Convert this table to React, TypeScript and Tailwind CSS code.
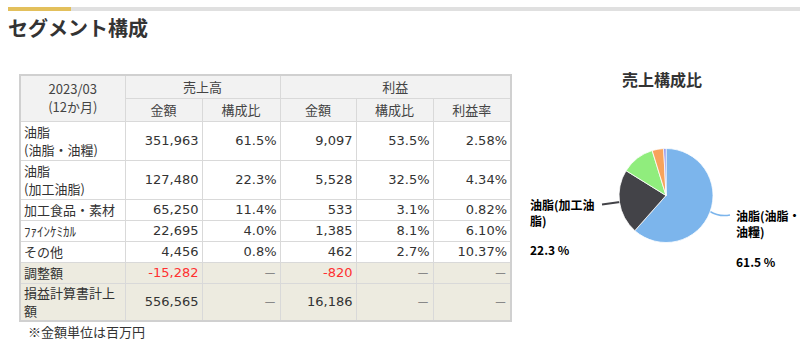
import React from "react";

const rows = [
  { name: ["油脂", "(油脂・油糧)"], sales: "351,963", ratio: "61.5%", profit: "9,097", pRatio: "53.5%", margin: "2.58%" },
  { name: ["油脂", "(加工油脂)"], sales: "127,480", ratio: "22.3%", profit: "5,528", pRatio: "32.5%", margin: "4.34%" },
  { name: ["加工食品・素材"], sales: "65,250", ratio: "11.4%", profit: "533", pRatio: "3.1%", margin: "0.82%" },
  { name: ["ﾌｧｲﾝｹﾐｶﾙ"], sales: "22,695", ratio: "4.0%", profit: "1,385", pRatio: "8.1%", margin: "6.10%" },
  { name: ["その他"], sales: "4,456", ratio: "0.8%", profit: "462", pRatio: "2.7%", margin: "10.37%" },
];

const totals = [
  { name: "調整額", sales: "-15,282", profit: "-820", neg: true },
  { name: "損益計算書計上額", sales: "556,565", profit: "16,186", neg: false },
];

const slices = [
  { value: 351963, color: "#7cb5ec" },
  { value: 127480, color: "#434348" },
  { value: 65250, color: "#90ed7d" },
  { value: 22695, color: "#f7a35c" },
  { value: 4456, color: "#8085e9" },
];

function Pie() {
  const cx = 146;
  const cy = 135.5;
  const r = 47;
  const total = slices.reduce((s, x) => s + x.value, 0);
  let acc = 0;
  const pt = (f: number) => {
    const a = f * Math.PI * 2;
    return [cx + r * Math.sin(a), cy - r * Math.cos(a)];
  };
  return (
    <svg width="280" height="250" viewBox="0 0 280 250" className="block">
      <text x="142" y="26" textAnchor="middle" fontSize="16" fontWeight="bold" fill="#333">
        売上構成比
      </text>
      <path d="M82 144.5 L100 142" stroke="#434348" strokeWidth="2" fill="none" />
      <path d="M190 151.5 Q199 157 210 155" stroke="#7cb5ec" strokeWidth="1.5" fill="none" />
      {slices.map((s, i) => {
        const f0 = acc / total;
        acc += s.value;
        const f1 = acc / total;
        const [x0, y0] = pt(f0);
        const [x1, y1] = pt(f1);
        const large = f1 - f0 > 0.5 ? 1 : 0;
        return (
          <path
            key={i}
            d={`M${cx} ${cy} L${x0} ${y0} A${r} ${r} 0 ${large} 1 ${x1} ${y1} Z`}
            fill={s.color}
            stroke="#fff"
            strokeWidth="0.8"
            strokeLinejoin="round"
          />
        );
      })}
      <g fontSize="12" fontWeight="bold" fill="#000">
        <text x="10" y="150">油脂(加工油</text>
        <text x="10" y="166">脂)</text>
        <text x="10" y="195">22.3 %</text>
        <text x="216" y="161">油脂(油脂・</text>
        <text x="216" y="177">油糧)</text>
        <text x="216" y="207">61.5 %</text>
      </g>
    </svg>
  );
}

const jp = "font-['Noto_Sans_CJK_JP',sans-serif]";
const num = "font-['DejaVu_Sans',sans-serif]";
const th = `border border-[#d9d9d9] bg-[#f2f2f2] py-0 font-normal text-center text-[#444] ${jp}`;
const td = "border border-[#d9d9d9] py-0 px-[3px] align-middle";

export default function App() {
  return (
    <div className="w-[800px] h-[340px] bg-white overflow-hidden text-[#333] font-['Noto_Sans_CJK_JP',sans-serif]">
      <div className="flex pt-[7px] pl-[8px]">
        <div className="w-[63px] h-[4px] bg-[#e3c05c]" />
        <div className="flex-1 h-[4px] bg-[#e0e0e0]" />
      </div>
      <h2 className="mt-[3px] pl-[8px] text-[20px] leading-[28px] font-bold text-[#333]">
        セグメント構成
      </h2>

      <div className="flex">
        <div className="pl-[19px] pt-[32px] w-[520px]">
          <table className="table-fixed border-collapse border-2 border-[#d0d0d0] text-[13px] leading-[18px] w-[491px]">
            <colgroup>
              <col className="w-[105px]" />
              <col className="w-[77px]" />
              <col className="w-[78px]" />
              <col className="w-[76px]" />
              <col className="w-[77px]" />
              <col className="w-[78px]" />
            </colgroup>
            <thead>
              <tr className="h-[23px]">
                <th rowSpan={2} className={th}>
                  2023/03
                  <br />
                  (12か月)
                </th>
                <th colSpan={2} className={th}>売上高</th>
                <th colSpan={3} className={th}>利益</th>
              </tr>
              <tr className="h-[23px]">
                <th className={th}>金額</th>
                <th className={th}>構成比</th>
                <th className={th}>金額</th>
                <th className={th}>構成比</th>
                <th className={th}>利益率</th>
              </tr>
            </thead>
            <tbody>
              {rows.map((r) => (
                <tr key={r.name.join("")} className={`bg-white ${r.name.length > 1 ? "h-[39px]" : "h-[21px]"}`}>
                  <td className={`${td} ${jp} text-left`}>
                    {r.name.map((n, i) => (
                      <div key={i}>{n}</div>
                    ))}
                  </td>
                  <td className={`${td} ${num} text-right`}>{r.sales}</td>
                  <td className={`${td} ${num} text-right`}>{r.ratio}</td>
                  <td className={`${td} ${num} text-right`}>{r.profit}</td>
                  <td className={`${td} ${num} text-right`}>{r.pRatio}</td>
                  <td className={`${td} ${num} text-right`}>{r.margin}</td>
                </tr>
              ))}
              {totals.map((t) => (
                <tr key={t.name} className={`bg-[#edebe0] ${t.neg ? "h-[21px]" : "h-[38px]"}`}>
                  <td className={`${td} ${jp} text-left`}>{t.name}</td>
                  <td className={`${td} ${num} text-right ${t.neg ? "text-[#ff3030]" : ""}`}>{t.sales}</td>
                  <td className={`${td} ${jp} text-right text-[#888]`}>－</td>
                  <td className={`${td} ${num} text-right ${t.neg ? "text-[#ff3030]" : ""}`}>{t.profit}</td>
                  <td className={`${td} ${jp} text-right text-[#888]`}>－</td>
                  <td className={`${td} ${jp} text-right text-[#888]`}>－</td>
                </tr>
              ))}
            </tbody>
          </table>
          <p className="pl-[9px] text-[13px] leading-[18px] mt-[1px]">
            ※金額単位は百万円
          </p>
        </div>
        <div className="pt-[18px]">
          <Pie />
        </div>
      </div>
    </div>
  );
}
